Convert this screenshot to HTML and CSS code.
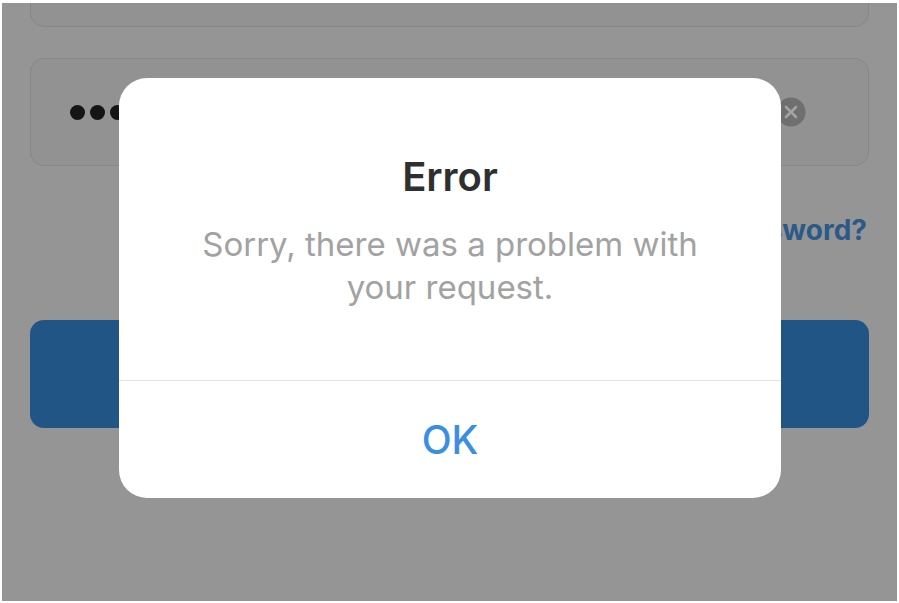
FILE: index.html
```html
<!DOCTYPE html>
<html lang="en">
  <head>
    <meta charset="UTF-8" />
    <meta name="viewport" content="width=device-width, initial-scale=1.0" />
    <title>Error</title>
    <link rel="stylesheet" href="styles.css">
  </head>

  <body>
    <div class="screen">
      <!-- login form behind the alert -->
      <div class="field field-top"></div>
      <div class="field field-password">
        <span class="dots">
          <span class="dot"></span>
          <span class="dot"></span>
          <span class="dot"></span>
        </span>
        <span class="clear">
          <svg width="30" height="30" viewBox="0 0 30 30">
            <circle cx="15" cy="15" r="14.5" fill="#6f6f6f" />
            <path d="M10 10 L20 20 M20 10 L10 20" stroke="#a3a3a3" stroke-width="2.6" stroke-linecap="round" />
          </svg>
        </span>
      </div>
      <div class="forgot">Forgot password?</div>
      <button class="login">Log In</button>

      <!-- alert -->
      <div class="alert">
        <div class="alert-body">
          <h1 class="alert-title">Error</h1>
          <p class="alert-message">Sorry, there was a problem with<br />your request.</p>
        </div>
        <div class="alert-action">OK</div>
      </div>
    </div>
  </body>
</html>
```

FILE: styles.css
```css
html,
body {
  margin: 0;
  padding: 0;
  background: #fff;
}

body {
  padding: 3px 2px 2px 2px;
  font-family: Inter, "Noto Sans", sans-serif;
}

.screen {
  position: relative;
  height: 598px;
  background: #959595;
  overflow: hidden;
  padding: 0 28px;
  display: flex;
  flex-direction: column;
}

.field {
  border: 1px solid #878787;
  border-radius: 14px;
  background: #929292;
  box-sizing: border-box;
}

.field-top {
  height: 100px;
  margin-top: -76px;
  flex-shrink: 0;
}

.field-password {
  height: 108px;
  margin-top: 31px;
  flex-shrink: 0;
  display: flex;
  align-items: center;
  justify-content: space-between;
  padding: 0 62px 0 39px;
}

.dots {
  display: flex;
  gap: 5px;
}

.dot {
  width: 15px;
  height: 15px;
  border-radius: 50%;
  background: #151515;
}

.clear svg {
  display: block;
}

.forgot {
  align-self: flex-end;
  margin-top: 48px;
  margin-right: 2px;
  font-size: 28px;
  font-weight: 700;
  line-height: 32px;
  color: #2b5a88;
}

.login {
  margin-top: 74px;
  height: 108px;
  border: none;
  border-radius: 14px;
  background: #215586;
  color: #8fa6bd;
  font-family: inherit;
  font-size: 28px;
  font-weight: 700;
  flex-shrink: 0;
}

.alert {
  position: absolute;
  left: 117px;
  top: 75px;
  width: 662px;
  height: 420px;
  background: #fff;
  border-radius: 28px;
  display: flex;
  flex-direction: column;
  text-align: center;
  overflow: hidden;
}

.alert-body {
  height: 302px;
  box-sizing: border-box;
  padding-top: 77px;
}

.alert-title {
  margin: 0;
  font-size: 40px;
  line-height: 44px;
  font-weight: 600;
  color: #2f2f2f;
}

.alert-message {
  margin: 24px 0 0;
  font-size: 33px;
  line-height: 43px;
  color: #a2a2a2;
}

.alert-action {
  flex: 1;
  border-top: 1px solid #e2e2e2;
  display: flex;
  align-items: center;
  justify-content: center;
  font-size: 39px;
  font-weight: 500;
  color: #3b8fe2;
}
```
